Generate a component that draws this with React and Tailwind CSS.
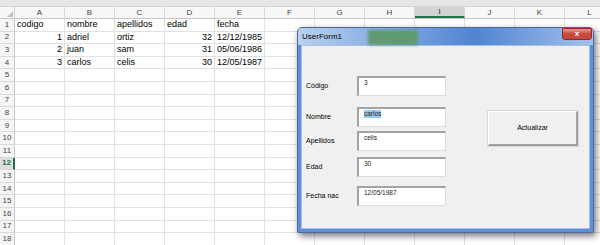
const COLS = ["A", "B", "C", "D", "E", "F", "G", "H", "I", "J", "K", "L"];
const DATA = [
  [["codigo", "l"], ["nombre", "l"], ["apellidos", "l"], ["edad", "l"], ["fecha", "l"]],
  [["1", "r"], ["adriel", "l"], ["ortiz", "l"], ["32", "r"], ["12/12/1985", "r"]],
  [["2", "r"], ["juan", "l"], ["sam", "l"], ["31", "r"], ["05/06/1986", "r"]],
  [["3", "r"], ["carlos", "l"], ["celis", "l"], ["30", "r"], ["12/05/1987", "r"]],
];

function Field({ label, value, selected, mt }) {
  return (
    <div className={`flex items-center ${mt}`}>
      <span className="w-[51px] text-[7px] text-black">{label}</span>
      <div className="w-[89px] h-[20px] flex items-start bg-white border-t-2 border-l-2 border-t-[#a3a3a3] border-l-[#a3a3a3] border-r border-b border-r-[#dcdcdc] border-b-[#dcdcdc] pl-[5px] pt-[1px] text-[6.5px] leading-[8px] text-[#222]">
        <span className={selected ? "bg-[#99c9ef]" : ""}>{value}</span>
      </div>
    </div>
  );
}

export default function App() {
  return (
    <div className="relative w-[600px] h-[245px] overflow-hidden bg-white font-['Liberation_Sans',Arial,sans-serif]">
      <div className="h-[7px] bg-[#e6e6e6] border-b border-[#d4d4d4]" />
      <div className="flex h-[12px] bg-[#f7f7f7] border-b border-[#c8c8c8]">
        <div className="w-[15px] shrink-0 border-r border-[#d0d0d0] flex items-end justify-end pr-[1px] pb-[1px]">
          <span className="w-0 h-0 border-l-[6px] border-l-transparent border-b-[6px] border-b-[#c4c4c4]" />
        </div>
        {COLS.map((c) => (
          <div key={c} className={`w-[50px] shrink-0 flex items-center justify-center text-[8px] border-r border-[#dadada] ${c === "I" ? "bg-[#d2d2d2] border-b-2 border-b-[#217346] text-[#1e1e1e]" : "text-[#444]"}`}>{c}</div>
        ))}
      </div>
      {Array.from({ length: 18 }, (_, r) => (
        <div key={r} className="flex h-[12.6px]">
          <div className={`w-[15px] shrink-0 flex items-center justify-center text-[8px] border-b border-[#dadada] ${r === 11 ? "bg-[#dedede] text-[#217346] font-bold border-r-2 border-r-[#217346]" : "bg-[#f5f5f5] text-[#444] border-r border-r-[#c8c8c8]"}`}>{r + 1}</div>
          {COLS.map((c, ci) => {
            const cell = DATA[r]?.[ci];
            return (
              <div key={c} className={`w-[50px] shrink-0 flex items-center px-[2px] text-[9px] text-black border-r border-b border-[#e1e1e1] ${cell?.[1] === "r" ? "justify-end" : "justify-start"}`}>
                {cell?.[0]}
              </div>
            );
          })}
        </div>
      ))}

      <div className="absolute left-[297px] top-[27px] w-[297px] h-[206px] rounded-t-[5px] rounded-b-[2px] border border-[#4a6a98] bg-[#5f8fd8] shadow-[2px_3px_7px_rgba(0,0,0,0.55)] flex flex-col">
        <div className="relative h-[17px] shrink-0 rounded-t-[4px] bg-gradient-to-r from-[#b9d1ef] via-[#4f84d3] via-60% to-[#a3c1ea] flex items-center pl-[4px]">
          <span className="text-[8px] text-black">UserForm1</span>
          <div className="absolute left-[70px] top-[2px] w-[50px] h-[15px] bg-[#5f9a70] blur-[1.5px]" />
          <div className="absolute right-[1px] top-0 w-[30px] h-[12px] rounded-b-[3px] border border-[#8a2a24] bg-gradient-to-b from-[#e59a8f] via-[#c9453b] to-[#c4493f] flex items-center justify-center">
            <span className="text-[8px] font-bold text-white leading-none">x</span>
          </div>
        </div>
        <div className="flex-1 mx-[3px] mb-[3px] bg-[#f0f0f0] border border-[#a9c0e4] flex pl-[4px]">
          <div className="flex flex-col pt-[30px]">
            <Field label="Código" value="3" />
            <Field label="Nombre" value="carlos" selected mt="mt-[11px]" />
            <Field label="Apellidos" value="celis" mt="mt-[4px]" />
            <Field label="Edad" value="30" mt="mt-[6px]" />
            <Field label="Fecha nac" value="12/05/1987" mt="mt-[9px]" />
          </div>
          <div className="ml-[42px] mt-[65px]">
            <div className="w-[90px] h-[35px] bg-[#f0f0f0] border-t border-l border-t-[#ffffff] border-l-[#ffffff] border-r-2 border-b-2 border-r-[#a0a0a0] border-b-[#a0a0a0] shadow-[0_0_0_1px_#d6d6d6] flex items-center justify-center">
              <span className="text-[7px] text-black">Actualizar</span>
            </div>
          </div>
        </div>
      </div>
    </div>
  );
}
